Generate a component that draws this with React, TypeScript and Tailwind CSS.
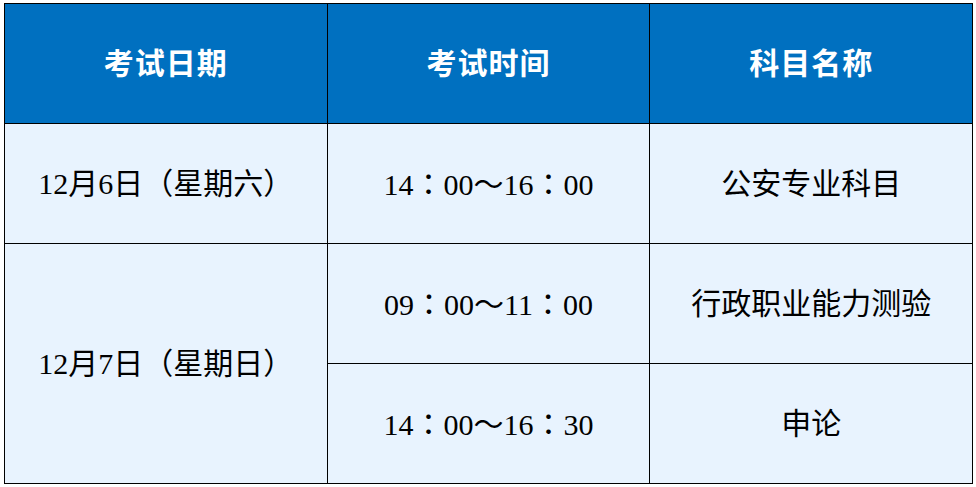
const rows = [
  { time: ["14", "00～16", "00"], subject: "公安专业科目" },
  { time: ["09", "00～11", "00"], subject: "行政职业能力测验" },
  { time: ["14", "00～16", "30"], subject: "申论" },
];

const cell = "border-[1.5px] border-black bg-[#e8f3fe] text-center align-middle text-[30px] text-black";

function Time({ parts }: { parts: string[] }) {
  const colon = (
    <span style={{ fontFamily: "'Noto Sans CJK TC', sans-serif" }}>：</span>
  );
  return (
    <span>
      {parts[0]}
      {colon}
      {parts[1]}
      {colon}
      {parts[2]}
    </span>
  );
}

export default function App() {
  return (
    <div
      className="h-[487px] w-[976px] bg-white pl-[4px] pt-[3px]"
      style={{ fontFamily: "'Liberation Serif', 'Noto Sans CJK SC', serif" }}
    >
      <table className="w-[969px] table-fixed border-collapse">
        <thead>
          <tr className="h-[120px]">
            {["考试日期", "考试时间", "科目名称"].map((h) => (
              <th
                key={h}
                className="border-[1.5px] border-black bg-[#0070c0] text-center align-middle text-[30px] font-bold tracking-[1px] text-white"
              >
                {h}
              </th>
            ))}
          </tr>
        </thead>
        <tbody>
          <tr className="h-[120px]">
            <td className={cell}>12月6日（星期六）</td>
            <td className={cell}><Time parts={rows[0].time} /></td>
            <td className={cell}>{rows[0].subject}</td>
          </tr>
          <tr className="h-[120px]">
            <td rowSpan={2} className={cell}>
              12月7日（星期日）
            </td>
            <td className={cell}><Time parts={rows[1].time} /></td>
            <td className={cell}>{rows[1].subject}</td>
          </tr>
          <tr className="h-[120px]">
            <td className={cell}><Time parts={rows[2].time} /></td>
            <td className={cell}>{rows[2].subject}</td>
          </tr>
        </tbody>
      </table>
    </div>
  );
}
